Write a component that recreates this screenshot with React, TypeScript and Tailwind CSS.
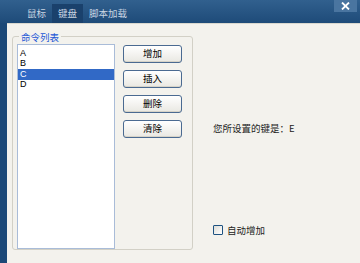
import { useState } from "react";

const cjk = "font-['Noto_Sans_CJK_SC','Noto_Sans',sans-serif]";

const tabs = ["鼠标", "键盘", "脚本加载"];
const items = ["A", "B", "C", "D"];
const actions = ["增加", "插入", "删除", "清除"];

export default function App() {
  const [tab, setTab] = useState(1);
  const [sel, setSel] = useState(2);
  const [auto, setAuto] = useState(false);

  return (
    <div className={`flex h-[263px] w-[360px] flex-col overflow-hidden bg-[#1c4a78] ${cjk}`}>
      {/* 顶部标签栏 */}
      <div className="relative flex h-[23px] shrink-0 bg-gradient-to-b from-[#31608e] to-[#1e4b79] pl-[21px] pt-[4px]">
        {tabs.map((t, i) => (
          <button
            key={t}
            type="button"
            onClick={() => setTab(i)}
            className={`flex h-[19px] items-center px-[6px] text-[9.5px] leading-none text-[#c9d5e2] ${
              tab === i ? "bg-[#1a416c]" : ""
            }`}
          >
            {t}
          </button>
        ))}
        <div className="absolute right-[3px] top-0 flex h-[12px] w-[23px] items-center justify-center bg-[#4a75a0]">
          <svg width="9" height="8" viewBox="0 0 9 8">
            <path d="M1 0.5 L8 7.5 M8 0.5 L1 7.5" stroke="#fff" strokeWidth="1.8" />
          </svg>
        </div>
      </div>

      <div className="flex flex-1">
        <div className="w-[7px] shrink-0 bg-[#1b4877]" />
        <div className="flex flex-1 border-t border-[#d9d8cf] bg-[#f3f2ed]">
          {/* 命令列表 */}
          <div className="relative ml-[5px] mt-[12px] flex h-[214px] w-[181px] gap-[8px] rounded-[3px] border border-[#d2d0c6] pl-[4px] pt-[7px]">
            <div className={`absolute left-[6px] top-[-5px] bg-[#f3f2ed] px-[2px] text-[9.5px] leading-[10px] text-[#2457d6]`}>
              命令列表
            </div>
            <div className="h-[205px] w-[98px] border border-[#a9bcd8] bg-white pt-[3px]">
              {items.map((it, i) => (
                <div
                  key={it}
                  onClick={() => setSel(i)}
                  className={`flex h-[10.5px] items-center pl-[2px] font-['Liberation_Sans',sans-serif] text-[9px] leading-none ${
                    sel === i ? "bg-[#3169c6] text-white" : "text-black"
                  }`}
                >
                  {it}
                </div>
              ))}
            </div>
            <div className="flex flex-col gap-[7px] pt-[1px]">
              {actions.map((a) => (
                <button
                  key={a}
                  type="button"
                  className="flex h-[18px] w-[59px] items-center justify-center rounded-[3px] border border-[#4a6a91] bg-gradient-to-b from-white to-[#e9e8e2] text-[9.5px] leading-none text-black shadow-[inset_0_-1px_0_#d6d3c8]"
                >
                  {a}
                </button>
              ))}
            </div>
          </div>

          {/* 右侧 */}
          <div className="ml-[20px] flex flex-col">
            <div className="mt-[99px] text-[9.5px] leading-[10px] text-[#222]">您所设置的键是：E</div>
            <label className="mt-[92px] flex items-center gap-[4px] text-[9.5px] leading-[10px] text-[#222]">
              <span
                onClick={() => setAuto(!auto)}
                className="flex h-[10px] w-[10px] items-center justify-center rounded-[1px] border border-[#1d5281] bg-gradient-to-br from-[#dcdcd6] to-white"
              >
                {auto ? <span className="h-[4px] w-[4px] bg-[#21a121]" /> : null}
              </span>
              自动增加
            </label>
          </div>
        </div>
      </div>
    </div>
  );
}
